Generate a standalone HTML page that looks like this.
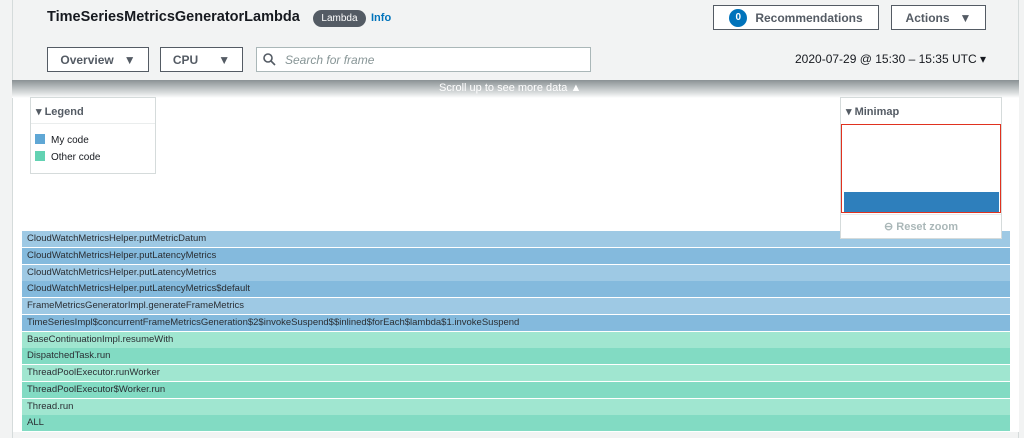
<!DOCTYPE html>
<html><head><meta charset="utf-8"><style>
*{box-sizing:border-box;margin:0;padding:0}
body{width:1024px;height:438px;overflow:hidden;background:#f2f3f3;font-family:"Liberation Sans",Arial,sans-serif;color:#16191f;position:relative}
.abs{position:absolute}
.btn{position:absolute;background:#fff;border:1px solid #545b64;font-weight:bold;font-size:12px;color:#545b64;display:flex;align-items:center;justify-content:center}
.main{position:absolute;left:12px;top:80px;width:1007px;height:352px;background:#fff;border-left:1px solid #d5dbdb}
.grad{position:absolute;left:12px;top:80px;width:1007px;height:18px;background:linear-gradient(#8a9194,#d9dcdd 70%,#fff)}
.row{position:absolute;left:22px;width:988px;height:16px;font-size:9.5px;line-height:16px;padding-left:5px;color:#2a2e33}
.b1{background:#9ec9e4}.b2{background:#84badd}.g1{background:#a0e6d0}.g2{background:#82dbc3}
</style></head><body>
<div class="abs" style="left:12px;top:0;width:1px;height:438px;background:#d5dbdb"></div>
<div class="abs" style="left:1018px;top:0;width:1px;height:438px;background:#d5dbdb"></div>
<div class="abs" style="left:47px;top:9px;font-size:14.5px;font-weight:bold">TimeSeriesMetricsGeneratorLambda</div>
<div class="abs" style="left:313px;top:10px;width:53px;height:17px;border-radius:9px;background:#545b64;color:#fff;font-size:10px;line-height:17px;text-align:center">Lambda</div>
<div class="abs" style="left:371px;top:12px;font-size:11px;font-weight:bold;color:#0073bb">Info</div>
<div class="btn" style="left:713px;top:5px;width:166px;height:25px;color:#545b64"><span style="display:inline-block;width:18px;height:18px;border-radius:9px;background:#0073bb;color:#fff;font-size:10px;line-height:18px;text-align:center;margin-right:8px">0</span>Recommendations</div>
<div class="btn" style="left:891px;top:5px;width:95px;height:25px">Actions&nbsp;&nbsp;&nbsp;▼</div>
<div class="btn" style="left:47px;top:47px;width:102px;height:25px">Overview&nbsp;&nbsp;&nbsp;▼</div>
<div class="btn" style="left:160px;top:47px;width:83px;height:25px">CPU&nbsp;&nbsp;&nbsp;&nbsp;&nbsp;&nbsp;▼</div>
<div class="abs" style="left:256px;top:47px;width:335px;height:25px;background:#fff;border:1px solid #aab7b8"></div>
<svg class="abs" style="left:263px;top:53px" width="13" height="13" viewBox="0 0 13 13"><circle cx="5" cy="5" r="4" fill="none" stroke="#545b64" stroke-width="1.6"/><path d="M8 8l4 4" stroke="#545b64" stroke-width="1.6"/></svg>
<div class="abs" style="left:285px;top:53px;font-size:12px;font-style:italic;color:#879596">Search for frame</div>
<div class="abs" style="left:795px;top:52px;font-size:12px">2020-07-29 @ 15:30 – 15:35 UTC ▾</div>
<div class="main"></div>
<div class="grad"></div>
<div class="abs" style="left:439px;top:82px;font-size:11px;color:#fff">Scroll up to see more data ▲</div>
<div class="abs" style="left:30px;top:97px;width:126px;height:77px;border:1px solid #d5dbdb;background:#fff">
<div style="height:26px;border-bottom:1px solid #eaeded;font-size:11px;font-weight:bold;color:#545b64;padding:7px 0 0 5px">▾ Legend</div>
<div style="font-size:10px;padding:8px 0 0 4px;line-height:17px"><span style="display:inline-block;width:10px;height:10px;background:#5fa7d5;vertical-align:-1px;margin-right:6px"></span>My code<br><span style="display:inline-block;width:10px;height:10px;background:#62d2b2;vertical-align:-1px;margin-right:6px"></span>Other code</div></div>
<div class="row b1" style="top:231px">CloudWatchMetricsHelper.putMetricDatum</div>
<div class="row b2" style="top:248px">CloudWatchMetricsHelper.putLatencyMetrics</div>
<div class="row b1" style="top:265px">CloudWatchMetricsHelper.putLatencyMetrics</div>
<div class="row b2" style="top:281px">CloudWatchMetricsHelper.putLatencyMetrics$default</div>
<div class="row b1" style="top:298px">FrameMetricsGeneratorImpl.generateFrameMetrics</div>
<div class="row b2" style="top:315px">TimeSeriesImpl$concurrentFrameMetricsGeneration$2$invokeSuspend$$inlined$forEach$lambda$1.invokeSuspend</div>
<div class="row g1" style="top:332px">BaseContinuationImpl.resumeWith</div>
<div class="row g2" style="top:348px">DispatchedTask.run</div>
<div class="row g1" style="top:365px">ThreadPoolExecutor.runWorker</div>
<div class="row g2" style="top:382px">ThreadPoolExecutor$Worker.run</div>
<div class="row g1" style="top:399px">Thread.run</div>
<div class="row g2" style="top:415px">ALL</div>
<div class="abs" style="left:840px;top:97px;width:162px;height:142px;border:1px solid #d5dbdb;background:#fff">
<div style="height:26px;font-size:11px;font-weight:bold;color:#545b64;padding:7px 0 0 5px">▾ Minimap</div>
<div style="position:absolute;left:0;top:26px;width:160px;height:89px;border:1px solid #e0321f"><div style="position:absolute;left:2px;bottom:0;width:155px;height:20px;background:#2e7fbc"></div></div>
<div style="position:absolute;left:0;top:116px;width:160px;height:24px;line-height:24px;border-top:1px solid #eaeded;font-size:11px;font-weight:bold;color:#aab7b8;text-align:center">⊖ Reset zoom</div></div>
</body></html>
